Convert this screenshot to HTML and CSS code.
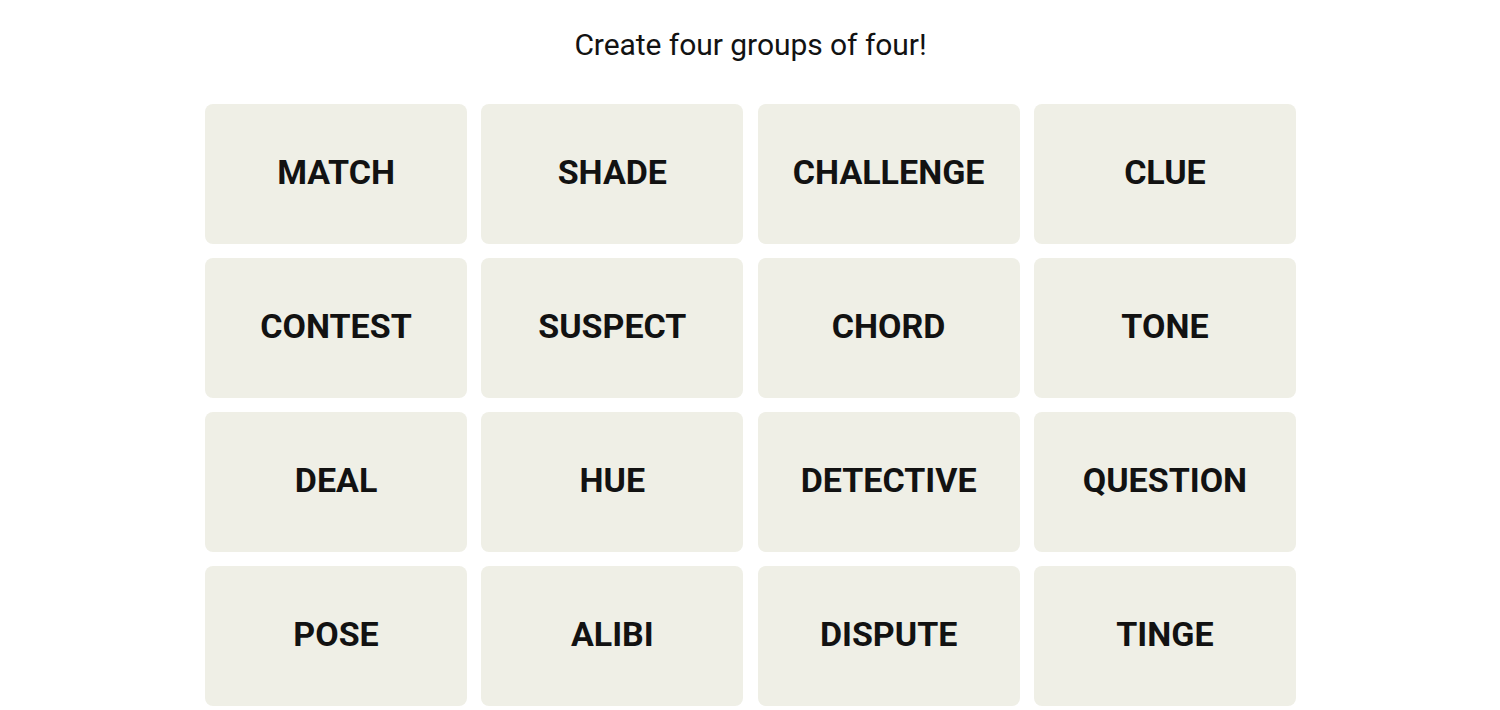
FILE: index.html
```html
<!DOCTYPE html>
<html lang="en">
<head>
<meta charset="utf-8">
<title>Connections</title>
<link rel="stylesheet" href="styles.css">
</head>
<body>
<main class="game">
  <p class="prompt">Create four groups of four!</p>
  <div class="board">
    <button class="tile">MATCH</button>
    <button class="tile">SHADE</button>
    <button class="tile">CHALLENGE</button>
    <button class="tile">CLUE</button>
    <button class="tile">CONTEST</button>
    <button class="tile">SUSPECT</button>
    <button class="tile">CHORD</button>
    <button class="tile">TONE</button>
    <button class="tile">DEAL</button>
    <button class="tile">HUE</button>
    <button class="tile">DETECTIVE</button>
    <button class="tile">QUESTION</button>
    <button class="tile">POSE</button>
    <button class="tile">ALIBI</button>
    <button class="tile">DISPUTE</button>
    <button class="tile">TINGE</button>
  </div>
</main>
</body>
</html>
```
FILE: styles.css
```css
html, body {
  margin: 0;
  padding: 0;
  background: #ffffff;
}

body {
  font-family: "Roboto", "Liberation Sans", sans-serif;
  color: #121212;
  overflow: hidden;
}

.game {
  display: flex;
  flex-direction: column;
  align-items: center;
  padding-left: 1px;
}

.prompt {
  margin: 0;
  padding-top: 27px;
  height: 104px;
  box-sizing: border-box;
  font-size: 30px;
  font-weight: 400;
  line-height: 36px;
  letter-spacing: -0.05px;
  color: #121212;
}

.board {
  display: grid;
  grid-template-columns: repeat(4, 262px);
  grid-auto-rows: 140px;
  column-gap: 14.3px;
  row-gap: 14px;
}

.tile {
  border: none;
  border-radius: 8px;
  background: #efefe6;
  color: #121212;
  font-family: "Roboto", "Liberation Sans", sans-serif;
  font-weight: 700;
  font-size: 34px;
  letter-spacing: 0;
  padding: 0 0 4px 0;
  margin: 0;
  display: flex;
  align-items: center;
  justify-content: center;
}
```
